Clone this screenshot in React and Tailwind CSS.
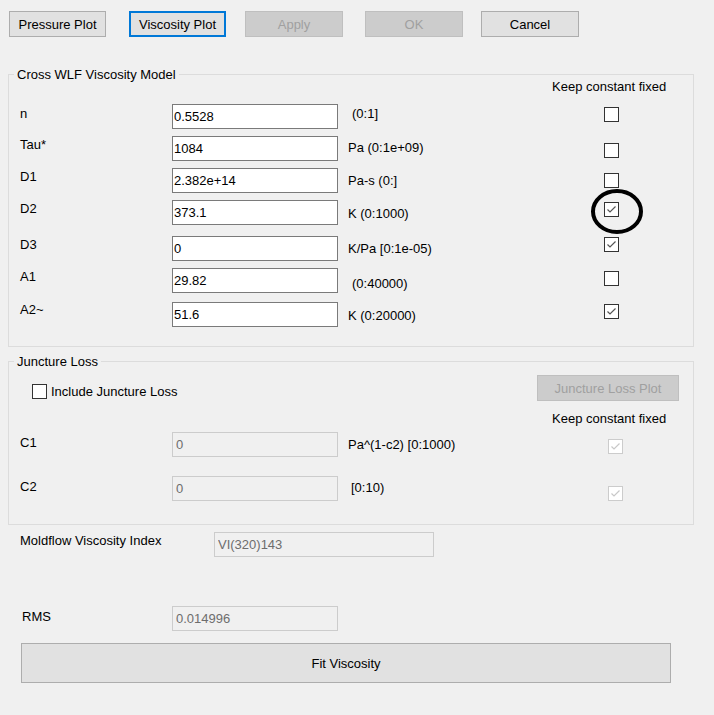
import React from 'react';

const rows = [
  { label: 'n', value: '0.5528', unit: '(0:1]', checked: false, row: 'h-[32px]', lm: 'mt-[2px]', um: 'mt-[2px] pl-[4px]', cm: 'mt-[3px]' },
  { label: 'Tau*', value: '1084', unit: 'Pa (0:1e+09)', checked: false, row: 'h-[32px]', lm: 'mt-[1px]', um: 'mt-[4px]', cm: 'mt-[7px]' },
  { label: 'D1', value: '2.382e+14', unit: 'Pa-s (0:]', checked: false, row: 'h-[32px]', lm: 'mt-[1px]', um: 'mt-[5px]', cm: 'mt-[5px]' },
  { label: 'D2', value: '373.1', unit: 'K (0:1000)', checked: true, circled: true, row: 'h-[36px]', lm: 'mt-[1px]', um: 'mt-[6px]', cm: 'mt-[2px]' },
  { label: 'D3', value: '0', unit: 'K/Pa [0:1e-05)', checked: true, row: 'h-[32px]', lm: 'mt-[1px]', um: 'mt-[5px]', cm: 'mt-[1px]' },
  { label: 'A1', value: '29.82', unit: '(0:40000)', checked: false, row: 'h-[34px]', lm: 'mt-[1px]', um: 'mt-[8px] pl-[4px]', cm: 'mt-[3px]' },
  { label: 'A2~', value: '51.6', unit: 'K (0:20000)', checked: true, row: 'h-[25px]', lm: 'mt-[0px]', um: 'mt-[6px]', cm: 'mt-[2px]' },
];

const Check = ({ checked, disabled }) => (
  <div
    className={`w-[15px] h-[15px] border bg-white flex items-center justify-center ${
      disabled ? 'border-[#cccccc] bg-[#f0f0f0]' : 'border-[#333333]'
    }`}
  >
    {checked && (
      <svg width="13" height="13" viewBox="0 0 13 13" fill="none">
        <path d="M2.5 6.5 L5 9 L10.5 3.5" stroke={disabled ? '#c8c8c8' : '#555555'} strokeWidth="1.2" />
      </svg>
    )}
  </div>
);

const Button = ({ children, disabled, focused, className = '' }) => (
  <button
    className={`h-[26px] flex items-center justify-center ${
      disabled
        ? 'bg-[#cccccc] border border-[#bfbfbf] text-[#a0a0a0]'
        : focused
        ? 'bg-[#e1e1e1] border-2 border-[#0078d7] text-black'
        : 'bg-[#e1e1e1] border border-[#adadad] text-black'
    } ${className}`}
  >
    {children}
  </button>
);

const Field = ({ value, disabled, className = '' }) => (
  <input
    readOnly
    value={value}
    className={`h-[25px] border outline-none text-[13px] ${
      disabled ? 'bg-[#f0f0f0] border-[#cccccc] text-[#6d6d6d] px-[3px]' : 'bg-white border-[#7a7a7a] text-black px-[1px]'
    } ${className}`}
  />
);

export default function App() {
  return (
    <div className="w-[714px] h-[715px] bg-[#f0f0f0] text-black text-[13px] leading-[15px] font-['Liberation_Sans',Arial,sans-serif] overflow-hidden">
      {/* Top buttons */}
      <div className="flex pt-[11px] pl-[9px]">
        <Button className="w-[97px]">Pressure Plot</Button>
        <Button focused className="w-[97px] ml-[23px]">Viscosity Plot</Button>
        <Button disabled className="w-[98px] ml-[19px]">Apply</Button>
        <Button disabled className="w-[98px] ml-[22px]">OK</Button>
        <Button className="w-[98px] ml-[18px]">Cancel</Button>
      </div>

      {/* Cross WLF Viscosity Model */}
      <fieldset className="mt-[30px] ml-[8px] w-[686px] h-[280px] border border-[#dcdcdc] pl-[11px]">
        <legend className="-ml-[6px] px-[3px] leading-[15px]">Cross WLF Viscosity Model</legend>
        <div className="flex -mt-[3px] h-[15px]">
          <div className="ml-[532px]">Keep constant fixed</div>
        </div>
        <div className="mt-[10px]">
          {rows.map((r) => (
            <div key={r.label} className={`flex items-start ${r.row}`}>
              <div className={`w-[152px] ${r.lm}`}>{r.label}</div>
              <Field value={r.value} className="w-[166px]" />
              <div className={`ml-[10px] w-[204px] ${r.um}`}>{r.unit}</div>
              <div className={`relative ml-[52px] ${r.cm}`}>
                <Check checked={r.checked} />
                {r.circled && (
                  <svg className="absolute -left-[13px] -top-[13px]" width="52" height="45" viewBox="0 0 52 45" fill="none">
                    <ellipse cx="26" cy="22.5" rx="24" ry="20.5" stroke="#000" strokeWidth="4" />
                  </svg>
                )}
              </div>
            </div>
          ))}
        </div>
      </fieldset>

      {/* Juncture Loss */}
      <fieldset className="mt-[7px] ml-[8px] w-[686px] h-[171px] border border-[#dcdcdc] pl-[11px]">
        <legend className="-ml-[6px] px-[3px] leading-[15px]">Juncture Loss</legend>
        <div className="flex items-start mt-[6px] h-[26px]">
          <div className="flex items-center ml-[12px] mt-[9px]">
            <Check />
            <span className="ml-[4px]">Include Juncture Loss</span>
          </div>
          <Button disabled className="w-[142px] ml-auto mr-[14px]">Juncture Loss Plot</Button>
        </div>
        <div className="flex mt-[10px] h-[15px]">
          <div className="ml-[532px]">Keep constant fixed</div>
        </div>
        <div className="flex items-start mt-[6px] h-[44px]">
          <div className="w-[152px] mt-[3px]">C1</div>
          <Field disabled value="0" className="w-[166px]" />
          <div className="ml-[10px] w-[204px] mt-[5px]">Pa^(1-c2) [0:1000)</div>
          <div className="ml-[56px] mt-[7px]">
            <Check checked disabled />
          </div>
        </div>
        <div className="flex items-start h-[25px]">
          <div className="w-[152px] mt-[3px]">C2</div>
          <Field disabled value="0" className="w-[166px]" />
          <div className="ml-[10px] w-[204px] mt-[4px] pl-[3px]">[0:10)</div>
          <div className="ml-[56px] mt-[10px]">
            <Check checked disabled />
          </div>
        </div>
      </fieldset>

      {/* Moldflow Viscosity Index */}
      <div className="flex items-start mt-[7px] pl-[20px]">
        <div className="w-[194px] mt-[1px]">Moldflow Viscosity Index</div>
        <Field disabled value="VI(320)143" className="w-[220px] h-[24px]" />
      </div>

      {/* RMS */}
      <div className="flex items-start mt-[49px] pl-[22px]">
        <div className="w-[150px] mt-[3px]">RMS</div>
        <Field disabled value="0.014996" className="w-[166px]" />
      </div>

      <div className="mt-[12px] pl-[21px]">
        <button className="w-[650px] h-[40px] bg-[#e1e1e1] border border-[#adadad] flex items-center justify-center">
          Fit Viscosity
        </button>
      </div>
    </div>
  );
}
